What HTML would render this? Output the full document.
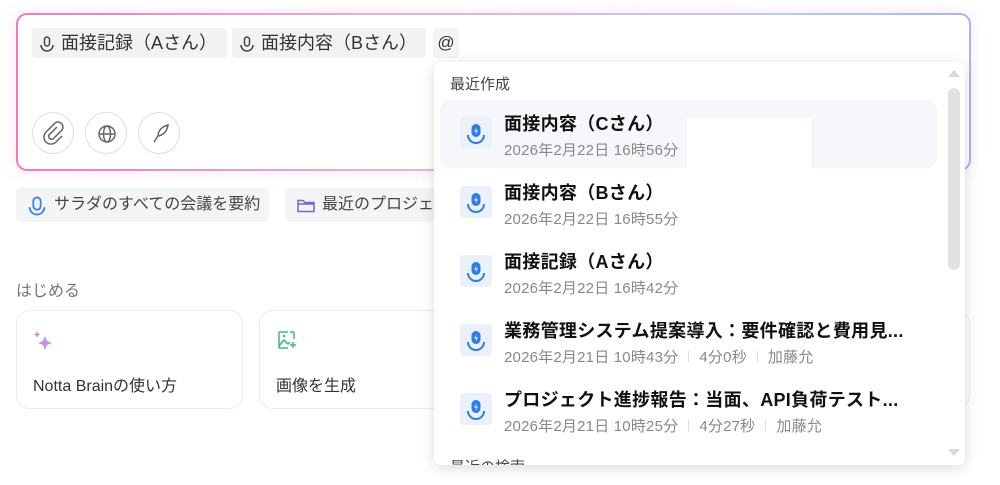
<!DOCTYPE html><html><head><meta charset="utf-8"><style>
*{box-sizing:border-box;margin:0;padding:0}
body{width:1000px;height:485px;overflow:hidden;background:#fff;font-family:"Liberation Sans","Noto Sans CJK JP",sans-serif;position:relative}
.box{position:absolute;left:16px;top:13px;width:955px;height:158px;border-radius:11px;padding:2px;background:linear-gradient(90deg,#e77fb8,#e6b5cf 40%,#b9cde6 80%,#a9b4ee);box-shadow:0 0 14px rgba(230,140,200,.25)}
.inner{width:100%;height:100%;background:#fff;border-radius:9px}
.chip{position:absolute;top:28px;height:30px;background:#f1f2f4;border-radius:4px;font-size:18px;color:#333;line-height:30px;padding-left:29px;white-space:nowrap}
.tool{position:absolute;top:112px;width:42px;height:42px;border:1px solid #dedede;border-radius:50%}
.sug{position:absolute;top:188px;height:34px;background:#f3f4f6;border-radius:5px;font-size:16px;color:#444;line-height:34px;padding-left:38px;white-space:nowrap;overflow:hidden}
.card{position:absolute;top:310px;height:99px;border:1px solid #ececec;border-radius:14px;font-size:16px;color:#333}
.dd{position:absolute;left:434px;top:62px;width:531px;height:403px;background:#fff;border-radius:7px;box-shadow:0 3px 14px rgba(0,0,0,.14);overflow:hidden}
.row{position:absolute;left:6px;width:497px;height:68px;border-radius:10px}
.ic{position:absolute;left:20px;top:17px;width:32px;height:32px;background:#eaf1fb;border-radius:4px}
.t{position:absolute;left:64px;top:10px;font-size:18px;letter-spacing:.3px;font-weight:bold;color:#111;white-space:nowrap}
.d{position:absolute;left:64px;top:39px;font-size:15px;letter-spacing:.2px;color:#888;white-space:nowrap}
.sep{display:inline-block;width:1px;height:11px;background:#ddd;margin:0 10px}
</style></head><body>
<div class="box"><div class="inner"></div></div>
<svg width="0" height="0" style="position:absolute"><defs>
<g id="mic"><rect x="-2.5" y="-7" width="5" height="9" rx="2.5" fill="none" stroke="#444" stroke-width="1.5"/><path d="M-6 1a6 6 0 0 0 12 0" fill="none" stroke="#444" stroke-width="1.5"/></g>
<g id="bmic"><rect x="-4.5" y="-9" width="9" height="13" rx="4.5" fill="#2f7de1"/><path d="M0.8-6L-1.8-1.5H0.5L-0.6 2L2-2.5H-0.3Z" fill="#fff"/><path d="M-8 2a8 8 0 0 0 16 0" fill="none" stroke="#2f7de1" stroke-width="2"/></g>
</defs></svg>
<div class="chip" style="left:32px;width:195px"><svg style="position:absolute;left:8px;top:8px" width="14" height="16" viewBox="-7 -8 14 16"><use href="#mic"/></svg>面接記録（Aさん）</div>
<div class="chip" style="left:232px;width:194px"><svg style="position:absolute;left:8px;top:8px" width="14" height="16" viewBox="-7 -8 14 16"><use href="#mic"/></svg>面接内容（Bさん）</div>
<div style="position:absolute;left:433px;top:28px;width:26px;height:30px;background:#f3f4f6;border-radius:4px;font-size:17px;line-height:30px;text-align:center;color:#333">@</div>
<div class="tool" style="left:32px"><svg width="42" height="42" viewBox="0 0 42 42"><path d="M24 15l-8 8a3 3 0 0 0 4 4l9-9a5 5 0 0 0-7-7l-9 9a7 7 0 0 0 10 10l6-6" fill="none" stroke="#666" stroke-width="1.5" transform="translate(0,-1)"/></svg></div>
<div class="tool" style="left:85px"><svg width="42" height="42" viewBox="0 0 42 42"><circle cx="21" cy="21" r="8" fill="none" stroke="#666" stroke-width="1.5"/><ellipse cx="21" cy="21" rx="3.5" ry="8" fill="none" stroke="#666" stroke-width="1.5"/><path d="M13 21h16" stroke="#666" stroke-width="1.5"/></svg></div>
<div class="tool" style="left:138px"><svg width="42" height="42" viewBox="0 0 42 42"><path d="M15 29l4-6M19 23c0-6 5-10 10-11-1 6-4 10-10 11z" fill="none" stroke="#666" stroke-width="1.5"/></svg></div>
<div class="sug" style="left:16px;width:253px"><svg style="position:absolute;left:12px;top:8px" width="18" height="20" viewBox="-8 -9 16 18"><g transform="scale(1.1)"><rect x="-3" y="-7" width="6" height="10" rx="3" fill="none" stroke="#3a86e0" stroke-width="1.5"/><path d="M-6 1a6 6 0 0 0 12 0" fill="none" stroke="#3a86e0" stroke-width="1.5"/></g></svg>サラダのすべての会議を要約</div>
<div class="sug" style="left:285px;width:160px;padding-left:37px"><svg style="position:absolute;left:12px;top:10px" width="18" height="15" viewBox="0 0 18 15"><path d="M1 2.5h5l2 2h9v9H1z M1 6h16" fill="none" stroke="#7b63c9" stroke-width="1.5"/></svg>最近のプロジェ</div>
<div style="position:absolute;left:16px;top:277px;font-size:16px;color:#777">はじめる</div>
<div class="card" style="left:16px;width:227px"><svg style="position:absolute;left:16px;top:19px" width="22" height="22" viewBox="0 0 22 22"><path d="M12 6l2 5 5 2-5 2-2 5-2-5-5-2 5-2z" fill="#c78ee8"/><path d="M4 1l1 2.5 2.5 1-2.5 1-1 2.5-1-2.5-2.5-1 2.5-1z" fill="#e88ac0"/></svg><div style="position:absolute;left:16px;top:61px">Notta Brainの使い方</div></div>
<div class="card" style="left:259px;width:230px"><svg style="position:absolute;left:17px;top:19px" width="20" height="20" viewBox="0 0 20 20"><path d="M11 2H3a1 1 0 0 0-1 1v14a1 1 0 0 0 1 1h8M17 9V3a1 1 0 0 0-1-1h-3M2 16l5-6 4 4 2-2" fill="none" stroke="#3cb87a" stroke-width="1.5"/><circle cx="7" cy="6" r="1.2" fill="#3cb87a"/><path d="M16 12v6M13 15h6" stroke="#3cb87a" stroke-width="1.5"/></svg><div style="position:absolute;left:16px;top:61px">画像を生成</div></div>
<div style="position:absolute;left:940px;top:310px;width:30px;height:99px;border:1px solid #ececec;border-radius:14px"></div>
<div class="dd">
<div style="position:absolute;left:16px;top:11px;font-size:15px;color:#444">最近作成</div>
<div class="row" style="top:38px;background:#f5f7fa"><div class="ic"><svg width="32" height="32" viewBox="-16 -16 32 32"><use href="#bmic"/></svg></div><div class="t">面接内容（Cさん）</div><div class="d">2026年2月22日 16時56分</div><div style="position:absolute;left:247px;top:18px;width:124px;height:50px;background:#fff"></div></div>
<div class="row" style="top:107px"><div class="ic"><svg width="32" height="32" viewBox="-16 -16 32 32"><use href="#bmic"/></svg></div><div class="t">面接内容（Bさん）</div><div class="d">2026年2月22日 16時55分</div></div>
<div class="row" style="top:176px"><div class="ic"><svg width="32" height="32" viewBox="-16 -16 32 32"><use href="#bmic"/></svg></div><div class="t">面接記録（Aさん）</div><div class="d">2026年2月22日 16時42分</div></div>
<div class="row" style="top:245px"><div class="ic"><svg width="32" height="32" viewBox="-16 -16 32 32"><use href="#bmic"/></svg></div><div class="t">業務管理システム提案導入：要件確認と費用見...</div><div class="d">2026年2月21日 10時43分<span class="sep"></span>4分0秒<span class="sep"></span>加藤允</div></div>
<div class="row" style="top:314px"><div class="ic"><svg width="32" height="32" viewBox="-16 -16 32 32"><use href="#bmic"/></svg></div><div class="t">プロジェクト進捗報告：当面、API負荷テスト...</div><div class="d">2026年2月21日 10時25分<span class="sep"></span>4分27秒<span class="sep"></span>加藤允</div></div>
<div style="position:absolute;left:16px;top:394px;font-size:15px;color:#444">最近の検索</div>
<div style="position:absolute;left:510px;top:0;width:21px;height:403px;background:#fff"></div>
<svg style="position:absolute;left:513px;top:6px" width="14" height="10"><path d="M1 9L7 2l6 7z" fill="#d8d8d8"/></svg>
<div style="position:absolute;left:514px;top:26px;width:12px;height:182px;background:#e2e2e4;border-radius:6px"></div>
<svg style="position:absolute;left:513px;top:386px" width="14" height="10"><path d="M1 1L7 8l6-7z" fill="#d8d8d8"/></svg>
</div>
</body></html>
